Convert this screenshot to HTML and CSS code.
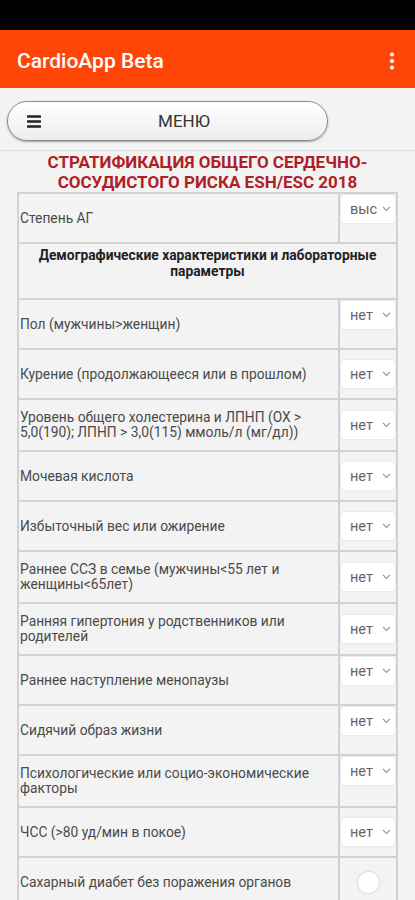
FILE: index.html
```html
<!DOCTYPE html>
<html lang="ru">
<head>
    <meta charset="UTF-8">
    <meta name="viewport" content="width=device-width, initial-scale=1.0">
    <title>CardioApp Beta</title>
    <link rel="stylesheet" href="styles.css">
</head>
<body>
    <div class="status-bar"></div>
    <header class="app-bar">
        <span class="app-title">CardioApp Beta</span>
        <svg class="overflow" width="6" height="18" viewBox="0 0 6 18">
            <circle cx="3" cy="2.5" r="2.1" fill="#fff"/>
            <circle cx="3" cy="9" r="2.1" fill="#fff"/>
            <circle cx="3" cy="15.5" r="2.1" fill="#fff"/>
        </svg>
    </header>

    <div class="menu-bar">
        <button class="menu-button" type="button">
            <svg class="burger" width="14" height="13" viewBox="0 0 14 13">
                <rect x="0" y="0.2" width="14" height="2.6" rx="0.6" fill="#222"/>
                <rect x="0" y="5.2" width="14" height="2.6" rx="0.6" fill="#222"/>
                <rect x="0" y="10.2" width="14" height="2.6" rx="0.6" fill="#222"/>
            </svg>
            <span class="menu-label">МЕНЮ</span>
        </button>
    </div>

    <main class="page">
        <h2 class="page-title">СТРАТИФИКАЦИЯ ОБЩЕГО СЕРДЕЧНО-СОСУДИСТОГО РИСКА ESH/ESC 2018</h2>

        <table class="risk-table">
            <tr>
                <td class="label">Степень АГ</td>
                <td class="choice top"><div class="pick"><span>выс</span><svg width="9" height="6" viewBox="0 0 9 6"><path d="M1 1l3.5 3.5L8 1" fill="none" stroke="#999" stroke-width="1.1"/></svg></div></td>
            </tr>
            <tr>
                <td class="section" colspan="2">Демографические характеристики и лабораторные параметры</td>
            </tr>
            <tr>
                <td class="label">Пол (мужчины&gt;женщин)</td>
                <td class="choice top"><div class="pick"><span>нет</span><svg width="9" height="6" viewBox="0 0 9 6"><path d="M1 1l3.5 3.5L8 1" fill="none" stroke="#999" stroke-width="1.1"/></svg></div></td>
            </tr>
            <tr>
                <td class="label">Курение (продолжающееся или в прошлом)</td>
                <td class="choice"><div class="pick"><span>нет</span><svg width="9" height="6" viewBox="0 0 9 6"><path d="M1 1l3.5 3.5L8 1" fill="none" stroke="#999" stroke-width="1.1"/></svg></div></td>
            </tr>
            <tr>
                <td class="label">Уровень общего холестерина и ЛПНП (ОХ &gt; 5,0(190); ЛПНП &gt; 3,0(115) ммоль/л (мг/дл))</td>
                <td class="choice"><div class="pick"><span>нет</span><svg width="9" height="6" viewBox="0 0 9 6"><path d="M1 1l3.5 3.5L8 1" fill="none" stroke="#999" stroke-width="1.1"/></svg></div></td>
            </tr>
            <tr>
                <td class="label">Мочевая кислота</td>
                <td class="choice"><div class="pick"><span>нет</span><svg width="9" height="6" viewBox="0 0 9 6"><path d="M1 1l3.5 3.5L8 1" fill="none" stroke="#999" stroke-width="1.1"/></svg></div></td>
            </tr>
            <tr>
                <td class="label">Избыточный вес или ожирение</td>
                <td class="choice"><div class="pick"><span>нет</span><svg width="9" height="6" viewBox="0 0 9 6"><path d="M1 1l3.5 3.5L8 1" fill="none" stroke="#999" stroke-width="1.1"/></svg></div></td>
            </tr>
            <tr>
                <td class="label">Раннее ССЗ в семье (мужчины&lt;55 лет и женщины&lt;65лет)</td>
                <td class="choice"><div class="pick"><span>нет</span><svg width="9" height="6" viewBox="0 0 9 6"><path d="M1 1l3.5 3.5L8 1" fill="none" stroke="#999" stroke-width="1.1"/></svg></div></td>
            </tr>
            <tr>
                <td class="label">Ранняя гипертония у родственников или родителей</td>
                <td class="choice"><div class="pick"><span>нет</span><svg width="9" height="6" viewBox="0 0 9 6"><path d="M1 1l3.5 3.5L8 1" fill="none" stroke="#999" stroke-width="1.1"/></svg></div></td>
            </tr>
            <tr>
                <td class="label">Раннее наступление менопаузы</td>
                <td class="choice top"><div class="pick"><span>нет</span><svg width="9" height="6" viewBox="0 0 9 6"><path d="M1 1l3.5 3.5L8 1" fill="none" stroke="#999" stroke-width="1.1"/></svg></div></td>
            </tr>
            <tr>
                <td class="label">Сидячий образ жизни</td>
                <td class="choice top"><div class="pick"><span>нет</span><svg width="9" height="6" viewBox="0 0 9 6"><path d="M1 1l3.5 3.5L8 1" fill="none" stroke="#999" stroke-width="1.1"/></svg></div></td>
            </tr>
            <tr>
                <td class="label">Психологические или социо-экономические факторы</td>
                <td class="choice top"><div class="pick"><span>нет</span><svg width="9" height="6" viewBox="0 0 9 6"><path d="M1 1l3.5 3.5L8 1" fill="none" stroke="#999" stroke-width="1.1"/></svg></div></td>
            </tr>
            <tr>
                <td class="label">ЧСС (&gt;80 уд/мин в покое)</td>
                <td class="choice"><div class="pick"><span>нет</span><svg width="9" height="6" viewBox="0 0 9 6"><path d="M1 1l3.5 3.5L8 1" fill="none" stroke="#999" stroke-width="1.1"/></svg></div></td>
            </tr>
            <tr>
                <td class="label">Сахарный диабет без поражения органов</td>
                <td class="choice"><span class="radio"></span></td>
            </tr>
        </table>
    </main>
</body>
</html>
```

FILE: styles.css
```css
body {
    margin: 0;
    background-color: #f3f3f3;
    font-family: Roboto, "Noto Sans", sans-serif;
    color: #4a4a4a;
}

.status-bar {
    height: 30px;
    background-color: #000;
}

.app-bar {
    height: 58px;
    padding: 0 20px 0 17px;
    display: flex;
    align-items: center;
    justify-content: space-between;
    background-color: #ff4508;
}

.app-title {
    color: #fff;
    font-size: 21px;
    font-weight: 500;
    padding-top: 4px;
}

.overflow {
    margin-top: 4px;
}

.menu-bar {
    height: 63px;
    box-sizing: border-box;
    padding: 13px 0 0 7px;
    border-bottom: 1px solid #dcdcdc;
}

.menu-button {
    width: 321px;
    height: 40px;
    padding: 0 0 0 19px;
    display: flex;
    align-items: center;
    border: 1px solid #8c8c8c;
    border-radius: 20px;
    background: linear-gradient(#ffffff, #ededed);
    box-shadow: 0 1px 2px rgba(0, 0, 0, 0.35);
    font-family: Roboto, "Noto Sans", sans-serif;
}

.burger {
    flex: 0 0 auto;
}

.menu-label {
    flex: 1;
    text-align: center;
    font-size: 17px;
    color: #333;
}

.page {
    padding: 1px 17px 0;
}

.page-title {
    margin: 0;
    text-align: center;
    font-size: 17px;
    line-height: 20px;
    font-weight: 700;
    color: #b01e26;
}

.risk-table {
    width: 100%;
    border-collapse: collapse;
    border: 2px solid #d2d2d2;
}

.risk-table td {
    border: 2px solid #d2d2d2;
    padding: 0;
}

.risk-table tr {
    height: 50px;
}

.label {
    padding: 10px 0 10px 1px !important;
    font-size: 13.8px;
    line-height: 15px;
    vertical-align: middle;
}

.section {
    padding: 3px 8px 19px !important;
    vertical-align: top;
    text-align: center;
    font-size: 13.8px;
    line-height: 16px;
    font-weight: 700;
    color: #222;
}

.choice {
    width: 54px;
    padding: 1px 1px !important;
    vertical-align: middle;
}

.choice.top {
    vertical-align: top;
}

.pick {
    height: 28px;
    padding: 0 4px 0 9px;
    display: flex;
    align-items: center;
    justify-content: space-between;
    background-color: #fff;
    border-radius: 4px;
    box-shadow: 0 0 2px rgba(0, 0, 0, 0.12);
    font-size: 14.5px;
    color: #666;
}

.radio {
    display: block;
    width: 21px;
    height: 21px;
    margin: 0 auto;
    border-radius: 50%;
    background-color: #fff;
    border: 1px solid #e0e0e0;
    box-shadow: 0 0 2px rgba(0, 0, 0, 0.08);
}
```
